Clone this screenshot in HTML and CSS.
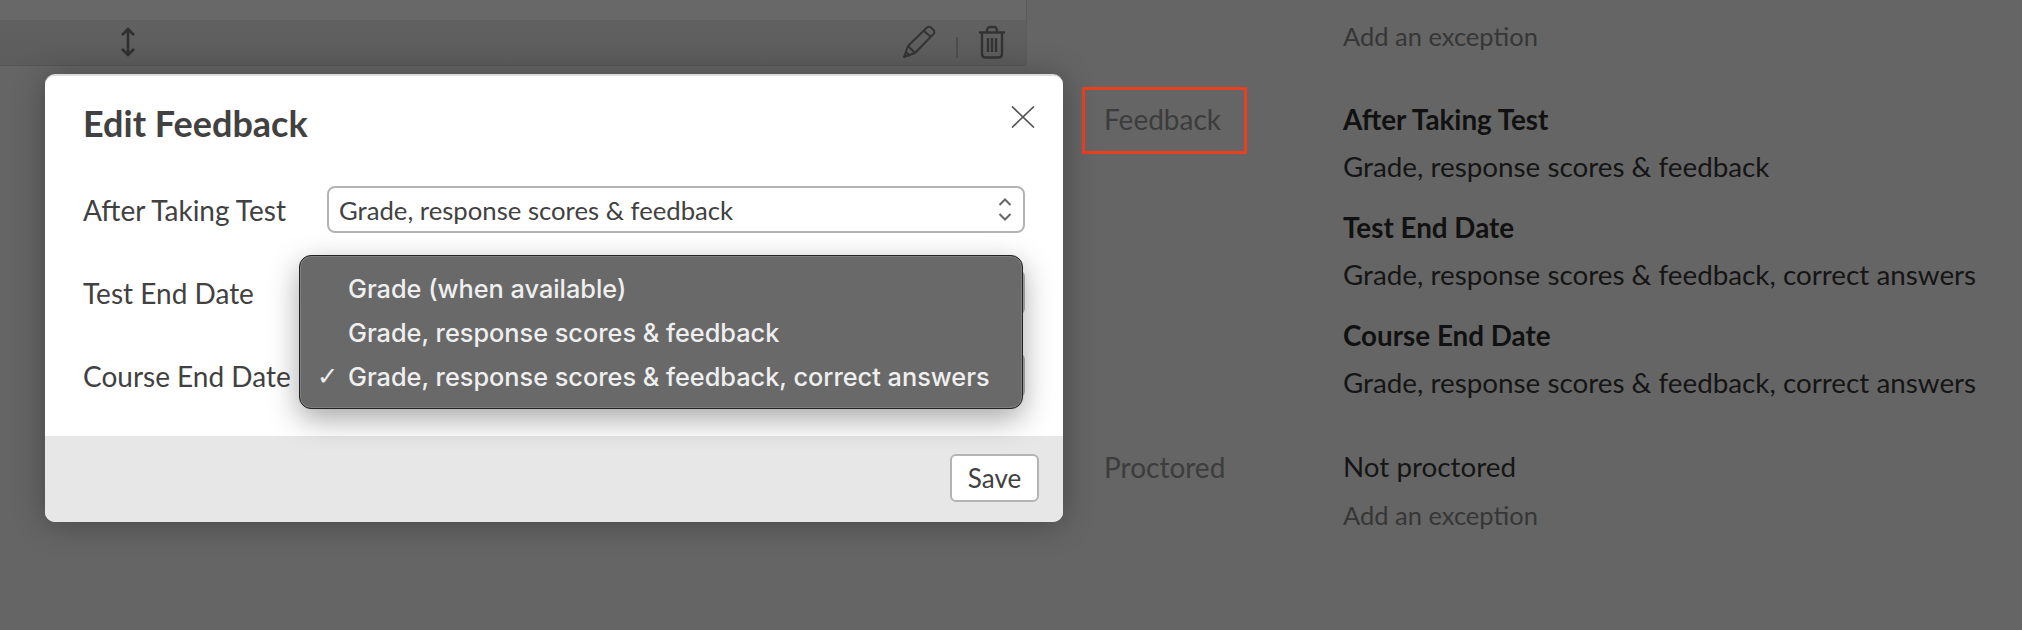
FILE: index.html
```html
<!DOCTYPE html>
<html lang="en">
<head>
<meta charset="utf-8">
<title>Edit Feedback</title>
<link rel="stylesheet" href="styles.css">
</head>
<body>
<div class="page">
  <div class="table-col">
    <div class="table-row">
      <svg class="icon-move" width="16" height="30" viewBox="0 0 16 30"><path d="M8 2V28M2 8L8 2L14 8M2 22L8 28L14 22" fill="none" stroke="#2f2f2f" stroke-width="2.6"/></svg>
      <div class="row-actions">
        <svg width="34" height="34" viewBox="0 0 34 34"><path d="M2 32L6 21L25 2.5Q27 1 29 2.5L32 5.500Q33 7.500 31.500 9L13 28ZM6 21L13 28M4 27L8 31M22 6L29 12" fill="none" stroke="#333" stroke-width="2" stroke-linejoin="round"/></svg>
        <span class="action-sep"></span>
        <svg width="28" height="34" viewBox="0 0 28 34"><path d="M1 7.500H27M9 6.500Q9 2 12 2H16Q19 2 19 6.500M4 8V29Q4 32.500 7.500 32.500H20.500Q24 32.500 24 29V8M10 13V27M14 13V27M18 13V27" fill="none" stroke="#333" stroke-width="2.4"/></svg>
      </div>
    </div>
  </div>
  <div class="settings">
    <div class="setting first">
      <div></div>
      <div class="values"><div class="link">Add an exception</div></div>
    </div>
    <div class="setting feedback">
      <div class="label boxed">Feedback</div>
      <div class="values">
        <div class="heading">After Taking Test</div>
        <div class="value">Grade, response scores &amp; feedback</div>
        <div class="heading spaced">Test End Date</div>
        <div class="value">Grade, response scores &amp; feedback, correct answers</div>
        <div class="heading spaced">Course End Date</div>
        <div class="value">Grade, response scores &amp; feedback, correct answers</div>
      </div>
    </div>
    <div class="setting proctored">
      <div class="label">Proctored</div>
      <div class="values">
        <div class="value">Not proctored</div>
        <div class="link">Add an exception</div>
      </div>
    </div>
  </div>
</div>

<section class="modal">
  <div class="modal-body">
    <header class="modal-head">
      <h1 class="modal-title">Edit Feedback</h1>
      <svg class="modal-close" width="24" height="22" viewBox="0 0 24 22"><path d="M1 0.500L23 21.500M23 0.500L1 21.500" fill="none" stroke="#555" stroke-width="1.700"/></svg>
    </header>
    <div class="form">
      <div class="form-row">
        <span class="form-label">After Taking Test</span>
        <div class="select">Grade, response scores &amp; feedback
          <svg class="chev" width="14" height="25" viewBox="0 0 14 25"><path d="M1.500 8L7 2.500L12.500 8M1.500 17L7 22.500L12.500 17" fill="none" stroke="#666" stroke-width="2"/></svg>
        </div>
      </div>
      <div class="form-row">
        <span class="form-label">Test End Date</span>
        <div class="select"></div>
      </div>
      <div class="form-row">
        <span class="form-label">Course End Date</span>
        <div class="select"></div>
      </div>
    </div>
  </div>
  <footer class="modal-foot"><button class="save" type="button">Save</button></footer>
  <div class="menu">
    <div class="menu-item">Grade (when available)</div>
    <div class="menu-item">Grade, response scores &amp; feedback</div>
    <div class="menu-item"><span class="check">✓</span>Grade, response scores &amp; feedback, correct answers</div>
  </div>
</section>
</body>
</html>
```
FILE: styles.css
```css
* { box-sizing: border-box; }
html, body { margin: 0; height: 100%; }
body {
  background: #656565;
  font-family: Lato, "Liberation Sans", sans-serif;
  font-size: 28px;
  overflow: hidden;
}
.page { display: flex; height: 630px; }
.table-col {
  width: 1027px;
  height: 66px;
  padding-top: 20px;
  background: #686868;
  border-right: 1px solid #5c5c5c;
  border-bottom: 1px solid #565656;
  border-bottom-right-radius: 4px;
}
.table-row {
  height: 45px;
  background: linear-gradient(#616161, #5c5c5c);
  display: flex;
  align-items: center;
  justify-content: space-between;
  padding: 2px 20px 3px 120px;
}
.row-actions { display: flex; align-items: center; gap: 20px; }
.action-sep { width: 2px; height: 21px; background: #4d4d4d; margin-top: 10px; }
.settings { margin-left: 55px; flex: 1; padding-top: 12px; }
.setting { display: grid; grid-template-columns: 261px 1fr; }
.feedback { margin-top: 35px; }
.proctored { margin-top: 36px; }
.label { color: #3c3c3c; line-height: 48px; padding-left: 22px; }
.boxed {
  width: 165px;
  height: 67px;
  margin-top: -8px;
  padding: 5px 0 0 19px;
  border: 3px solid #ea4020;
}
.values { font-size: 27.8px; line-height: 48px; }
.link { color: #363636; font-size: 25.5px; }
.heading { color: #111; font-weight: 700; padding-top: 2px; line-height: 46px; }
.value { color: #151515; }
.spaced { margin-top: 12px; }

.modal {
  position: absolute;
  left: 45px;
  top: 74px;
  width: 1018px;
  height: 448px;
  border-radius: 10px;
  background: #fff;
  border-top: 2px solid #dcdcdc;
  box-shadow: 0 2px 32px rgba(0, 0, 0, .3);
  display: flex;
  flex-direction: column;
  color: #414141;
}
.modal-body { flex: 1; padding: 0 38px 0 38px; }
.modal-head { display: flex; justify-content: space-between; height: 110px; }
.modal-title { margin: 24px 0 0; font-size: 36px; font-weight: 700; line-height: 46px; }
.modal-close { margin: 30px -10px 0 0; }
.form { display: flex; flex-direction: column; gap: 36px; }
.form-row { display: flex; align-items: center; }
.form-label { width: 244px; }
.select {
  position: relative;
  flex: 1;
  height: 47px;
  padding: 0 10px;
  border: 2px solid #b4b4b4;
  border-radius: 8px;
  background: #fff;
  font-size: 25.7px;
  line-height: 44px;
}
.chev { position: absolute; right: 11px; top: 9px; }
.modal-foot {
  height: 86px;
  background: #e6e7e6;
  border-radius: 0 0 10px 10px;
  padding: 18px 24px 0 0;
  display: flex;
  justify-content: flex-end;
}
.save {
  width: 89px;
  height: 48px;
  border: 2px solid #b4b4b4;
  border-radius: 6px;
  background: #fff;
  color: #414141;
  font: 26px Lato, "Liberation Sans", sans-serif;
  padding: 0;
}
.menu {
  position: absolute;
  left: 254px;
  top: 179px;
  width: 724px;
  height: 154px;
  padding: 11px 0 0 48px;
  border: 1px solid #222;
  border-radius: 12px;
  background: #696969;
  box-shadow: inset 0 0 0 1px #808080, 0 10px 30px rgba(0, 0, 0, .35);
  color: #efefef;
  font-family: Inter, "Liberation Sans", sans-serif;
  font-size: 25.3px;
  font-weight: 500;
}
.menu-item { position: relative; line-height: 44px; white-space: nowrap; }
.check { position: absolute; left: -31px; top: 0; font-family: "DejaVu Sans", sans-serif; font-weight: 400; }
```
